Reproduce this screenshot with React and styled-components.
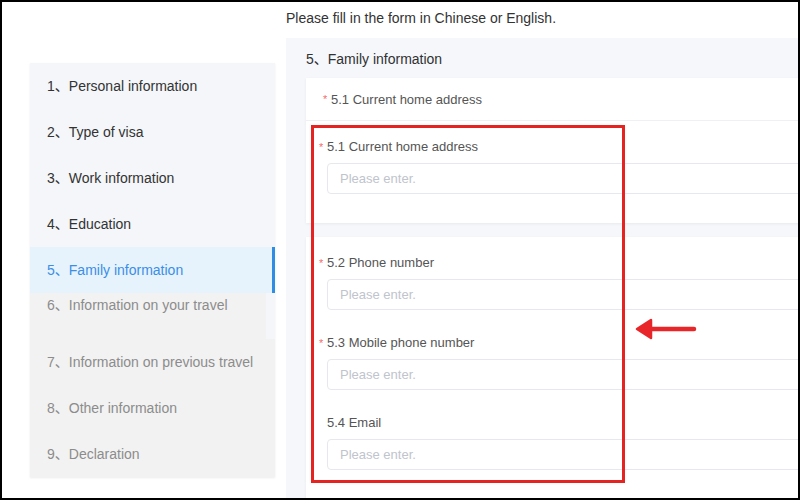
import React from "react";
import styled, { createGlobalStyle } from "styled-components";

const GlobalStyle = createGlobalStyle`
    body {
        margin: 0;
        background: #ffffff;
        font-family: "Liberation Sans", Arial, "Noto Sans CJK SC", sans-serif;
    }
`;

const steps = [
    { no: 1, title: "Personal information", state: "done" },
    { no: 2, title: "Type of visa", state: "done" },
    { no: 3, title: "Work information", state: "done" },
    { no: 4, title: "Education", state: "done" },
    { no: 5, title: "Family information", state: "active" },
    { no: 6, title: "Information on your travel", state: "todo", squeezed: true },
    { no: 7, title: "Information on previous travel", state: "todo" },
    { no: 8, title: "Other information", state: "todo" },
    { no: 9, title: "Declaration", state: "todo" },
];

const fields = [
    { label: "5.2 Phone number", required: true },
    { label: "5.3 Mobile phone number", required: true },
    { label: "5.4 Email", required: false },
];

const App = () => {
    return (
        <>
            <GlobalStyle />
            <Page>
                <Sidebar>
                    {steps.map((s) => (
                        <StepRow key={s.no} $state={s.state} $squeezed={s.squeezed}>
                            {s.no}、{s.title}
                        </StepRow>
                    ))}
                </Sidebar>

                <Content>
                    <Notice>Please fill in the form in Chinese or English.</Notice>
                    <Panel>
                        <SectionTitle>5、Family information</SectionTitle>

                        <Card>
                            <CardHead>
                                <Star>*</Star>5.1 Current home address
                            </CardHead>
                            <CardBody $bottom={29}>
                                <Field $last>
                                    <Label>
                                        <Star>*</Star>5.1 Current home address
                                    </Label>
                                    <Input placeholder="Please enter." />
                                </Field>
                            </CardBody>
                        </Card>

                        <Card>
                            <CardBody $bottom={40}>
                                {fields.map((f) => (
                                    <Field key={f.label}>
                                        <Label>
                                            {f.required && <Star>*</Star>}
                                            {f.label}
                                        </Label>
                                        <Input placeholder="Please enter." />
                                    </Field>
                                ))}
                            </CardBody>
                        </Card>
                    </Panel>
                </Content>

                <Highlight />
                <Arrow width="64" height="24" viewBox="0 0 64 24">
                    <line x1="14" y1="12" x2="59" y2="12" stroke="#e8262a" strokeWidth="4.5" strokeLinecap="round" />
                    <polygon
                        points="2,12 16,3 16,21"
                        fill="#e8262a"
                        stroke="#e8262a"
                        strokeWidth="2.5"
                        strokeLinejoin="round"
                    />
                </Arrow>
            </Page>
        </>
    );
};

const Page = styled.div`
    position: relative;
    display: flex;
    width: 800px;
    height: 500px;
    box-sizing: border-box;
    border: 2px solid #000;
    overflow: hidden;
    background: #fff;
`;

const Sidebar = styled.div`
    flex: none;
    width: 245px;
    height: 414px;
    margin: 61px 0 0 28px;
    background: #f4f6f9;
    box-shadow: 0 1px 2px rgba(0, 0, 0, 0.08);
`;

const StepRow = styled.div`
    box-sizing: border-box;
    height: 46px;
    display: flex;
    align-items: ${(p) => (p.$squeezed ? "flex-start" : "center")};
    padding: ${(p) => (p.$squeezed ? "2px 0 0 17px" : "0 0 0 17px")};
    margin-right: ${(p) => (p.$squeezed ? "9px" : "0")};
    font-size: 14px;
    line-height: 20px;
    white-space: nowrap;
    color: ${(p) => (p.$state === "active" ? "#3a8ee6" : p.$state === "todo" ? "#8c8c8c" : "#333333")};
    background: ${(p) => (p.$state === "active" ? "#e6f3fd" : p.$state === "todo" ? "#f2f2f2" : "transparent")};
    border-right: ${(p) => (p.$state === "active" ? "3px solid #2f8de4" : "none")};
`;

const Content = styled.div`
    flex: 0 0 560px;
    margin-left: 11px;
    display: flex;
    flex-direction: column;
    min-height: 0;
`;

const Notice = styled.div`
    flex: none;
    box-sizing: border-box;
    height: 36px;
    padding-bottom: 4px;
    display: flex;
    align-items: center;
    font-size: 14px;
    color: #333;
`;

const Panel = styled.div`
    flex: 1 0 auto;
    background: #f5f7fa;
    padding: 11px 0 0 20px;
`;

const SectionTitle = styled.div`
    font-size: 14px;
    line-height: 20px;
    color: #303133;
    margin-bottom: 9px;
`;

const Card = styled.div`
    background: #fff;
    margin-bottom: 14px;
    box-shadow: 0 1px 3px rgba(0, 0, 0, 0.06);
`;

const CardHead = styled.div`
    box-sizing: border-box;
    height: 43px;
    padding-left: 25px;
    display: flex;
    align-items: center;
    border-bottom: 1px solid #eef0f4;
    font-size: 13px;
    color: #555;
`;

const CardBody = styled.div`
    padding: 18px 20px ${(p) => p.$bottom}px 21px;
`;

const Field = styled.div`
    margin-bottom: ${(p) => (p.$last ? "0" : "25px")};
`;

const Label = styled.div`
    font-size: 13px;
    line-height: 16px;
    color: #555;
    margin-bottom: 8px;
`;

const Star = styled.span`
    display: inline-block;
    width: 5px;
    margin: 0 3px 0 -8px;
    color: #f56c6c;
    font-size: 11px;
    vertical-align: top;
`;

const Input = styled.input`
    display: block;
    box-sizing: border-box;
    width: 100%;
    height: 31px;
    padding: 0 12px;
    border: 1px solid #e6e8ed;
    border-radius: 4px;
    font-family: inherit;
    font-size: 13px;
    color: #333;
    background: #fff;
    outline: none;

    &::placeholder {
        color: #c0c4cc;
    }
`;

const Highlight = styled.div`
    position: absolute;
    left: 309px;
    top: 123px;
    width: 314px;
    height: 358px;
    box-sizing: border-box;
    border: 3px solid #e52321;
    pointer-events: none;
`;

const Arrow = styled.svg`
    position: absolute;
    left: 633px;
    top: 315px;
`;

export default App;
